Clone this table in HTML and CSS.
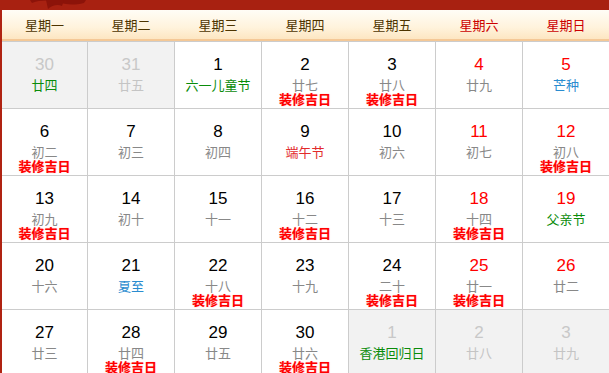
FILE: index.html
```html
<!DOCTYPE html>
<html lang="zh-CN">
<head>
<meta charset="utf-8">
<title>日历</title>
<link rel="stylesheet" href="styles.css">
</head>
<body>
<div class="cal">
  <div class="band">
    <svg class="deco" width="60" height="9" viewBox="0 0 60 9"><path d="M4 3 C12 0 22 0 30 2 C36 4 44 6 56 3 L58 0 L2 0 Z" fill="#8c1309"/><path d="M20 9 C24 5 30 4 34 6 L36 0 L18 0 Z" fill="#8c1309"/></svg>
  </div>
  <div class="frame">
    <div class="head">
      <div class="wd">星期一</div>
      <div class="wd">星期二</div>
      <div class="wd">星期三</div>
      <div class="wd">星期四</div>
      <div class="wd">星期五</div>
      <div class="wd we">星期六</div>
      <div class="wd we">星期日</div>
    </div>
    <div class="grid">
      <div class="cell other"><div class="num">30</div><div class="lunar green">廿四</div></div>
      <div class="cell other"><div class="num">31</div><div class="lunar">廿五</div></div>
      <div class="cell"><div class="num">1</div><div class="lunar green">六一儿童节</div></div>
      <div class="cell"><div class="num">2</div><div class="lunar">廿七</div><div class="tag">装修吉日</div></div>
      <div class="cell"><div class="num">3</div><div class="lunar">廿八</div><div class="tag">装修吉日</div></div>
      <div class="cell wkend"><div class="num">4</div><div class="lunar">廿九</div></div>
      <div class="cell wkend"><div class="num">5</div><div class="lunar blue">芒种</div></div>

      <div class="cell"><div class="num">6</div><div class="lunar">初二</div><div class="tag">装修吉日</div></div>
      <div class="cell"><div class="num">7</div><div class="lunar">初三</div></div>
      <div class="cell"><div class="num">8</div><div class="lunar">初四</div></div>
      <div class="cell"><div class="num">9</div><div class="lunar red">端午节</div></div>
      <div class="cell"><div class="num">10</div><div class="lunar">初六</div></div>
      <div class="cell wkend"><div class="num">11</div><div class="lunar">初七</div></div>
      <div class="cell wkend"><div class="num">12</div><div class="lunar">初八</div><div class="tag">装修吉日</div></div>

      <div class="cell"><div class="num">13</div><div class="lunar">初九</div><div class="tag">装修吉日</div></div>
      <div class="cell"><div class="num">14</div><div class="lunar">初十</div></div>
      <div class="cell"><div class="num">15</div><div class="lunar">十一</div></div>
      <div class="cell"><div class="num">16</div><div class="lunar">十二</div><div class="tag">装修吉日</div></div>
      <div class="cell"><div class="num">17</div><div class="lunar">十三</div></div>
      <div class="cell wkend"><div class="num">18</div><div class="lunar">十四</div><div class="tag">装修吉日</div></div>
      <div class="cell wkend"><div class="num">19</div><div class="lunar green">父亲节</div></div>

      <div class="cell"><div class="num">20</div><div class="lunar">十六</div></div>
      <div class="cell"><div class="num">21</div><div class="lunar blue">夏至</div></div>
      <div class="cell"><div class="num">22</div><div class="lunar">十八</div><div class="tag">装修吉日</div></div>
      <div class="cell"><div class="num">23</div><div class="lunar">十九</div></div>
      <div class="cell"><div class="num">24</div><div class="lunar">二十</div><div class="tag">装修吉日</div></div>
      <div class="cell wkend"><div class="num">25</div><div class="lunar">廿一</div><div class="tag">装修吉日</div></div>
      <div class="cell wkend"><div class="num">26</div><div class="lunar">廿二</div></div>

      <div class="cell"><div class="num">27</div><div class="lunar">廿三</div></div>
      <div class="cell"><div class="num">28</div><div class="lunar">廿四</div><div class="tag">装修吉日</div></div>
      <div class="cell"><div class="num">29</div><div class="lunar">廿五</div></div>
      <div class="cell"><div class="num">30</div><div class="lunar">廿六</div><div class="tag">装修吉日</div></div>
      <div class="cell other"><div class="num">1</div><div class="lunar green">香港回归日</div></div>
      <div class="cell other"><div class="num">2</div><div class="lunar">廿八</div></div>
      <div class="cell other"><div class="num">3</div><div class="lunar">廿九</div></div>
    </div>
  </div>
</div>
</body>
</html>
```
FILE: styles.css
```css
html, body {
  margin: 0;
  padding: 0;
  background: #fff;
  overflow: hidden;
}
.cal {
  width: 609px;
  font-family: "Noto Sans CJK SC", "Liberation Sans", sans-serif;
}
.band {
  height: 10px;
  background: #a82111;
  display: flex;
}
.deco {
  margin-left: 28px;
  display: block;
}
.frame {
  border-left: 2px solid #b02312;
}
.head {
  display: grid;
  grid-template-columns: 85px repeat(6, 86px);
  column-gap: 1px;
  height: 29px;
  background: linear-gradient(#fffdf6, #fff3dc 60%, #fde6c2);
  border-bottom: 2px solid #f4c896;
}
.wd {
  display: flex;
  align-items: center;
  justify-content: center;
  font-size: 13px;
  color: #4d3400;
}
.wd.we {
  color: #cc0000;
}
.grid {
  display: grid;
  grid-template-columns: 85px repeat(6, 86px);
  grid-auto-rows: 66px;
  gap: 1px;
  padding-top: 1px;
  background: #cccccc;
}
.cell {
  background: #fff;
  display: flex;
  flex-direction: column;
  align-items: center;
  padding-top: 13px;
  box-sizing: border-box;
  overflow: hidden;
}
.num {
  font-family: "Liberation Sans", Arial, sans-serif;
  font-size: 17px;
  line-height: 20px;
  color: #000;
}
.wkend .num {
  color: #ff0000;
}
.lunar {
  font-size: 13px;
  line-height: 14px;
  margin-top: 3px;
  color: #888888;
}
.lunar.green { color: #0a8c0a; }
.lunar.blue { color: #2a8ccf; }
.lunar.red { color: #e22a2a; }
.tag {
  font-size: 13px;
  line-height: 14px;
  font-weight: bold;
  color: #ff0000;
  text-shadow: 0 0 1px rgba(255, 80, 80, 0.6);
}
.cell.other {
  background: #f2f2f2;
}
.cell.other .num {
  color: #c8c8c8;
}
.cell.other .lunar {
  color: #c4c4c4;
}
.cell.other .lunar.green {
  color: #0a8c0a;
}
```
